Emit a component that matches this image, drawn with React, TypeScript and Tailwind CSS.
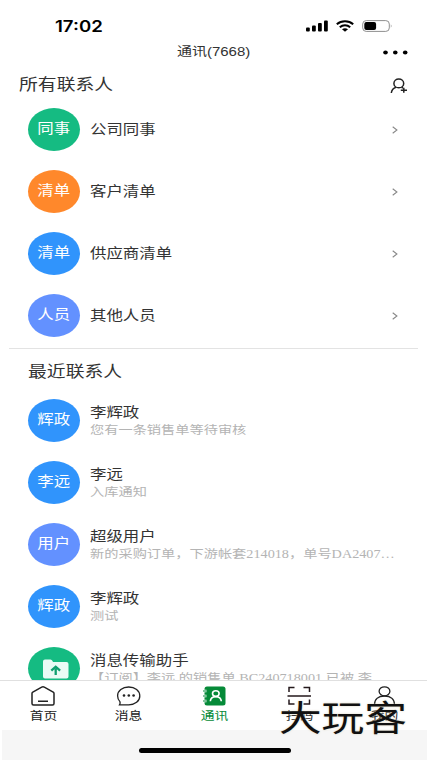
import type { ReactNode } from 'react'
import clsx from 'clsx'

const groups = [
  { badge: '同事', name: '公司同事', color: 'bg-[#15bb82]' },
  { badge: '清单', name: '客户清单', color: 'bg-[#ff882b]' },
  { badge: '清单', name: '供应商清单', color: 'bg-[#3094fc]' },
  { badge: '人员', name: '其他人员', color: 'bg-[#6391ff]' },
]

const recents = [
  { badge: '辉政', name: '李辉政', note: '您有一条销售单等待审核', color: 'bg-[#3094fc]' },
  { badge: '李远', name: '李远', note: '入库通知', color: 'bg-[#3094fc]' },
  { badge: '用户', name: '超级用户', note: '新的采购订单，下游帐套214018，单号DA2407…', color: 'bg-[#6391ff]' },
  { badge: '辉政', name: '李辉政', note: '测试', color: 'bg-[#3094fc]' },
  { badge: '', name: '消息传输助手', note: '【订阅】李远 的销售单 BC240718001 已被 李', color: 'bg-[#15bb82]' },
]

// The whole screen uses wide lettering, 1.2 times its natural width
const Wide = ({ children, className, center }: { children: ReactNode; className?: string; center?: boolean }) => (
  <span className={clsx('block w-max scale-x-120 whitespace-nowrap', center ? 'origin-center' : 'origin-left', className)}>
    {children}
  </span>
)

const FolderIcon = () => (
  <svg className="mt-[2px] ml-[3px]" width="28" height="22" viewBox="0 0 28 22">
    <path d="M1 3.500Q1 1.500 3 1.500H8.500Q9.800 1.500 10.500 3L11 4H24.500Q26.500 4 26.500 6V18.500Q26.500 20.500 24.500 20.500H3Q1 20.500 1 18.500Z" fill="#e9fbf5" />
    <path d="M13.700 17V10.500M9.300 12.700L13.700 8.700L18.100 12.700" fill="none" stroke="#0f9f70" strokeWidth="2.300" />
  </svg>
)

const Avatar = ({ badge, color }: { badge: string; color: string }) => (
  <div className={clsx('flex h-[43px] w-[52px] shrink-0 items-center justify-center rounded-[50%] text-white', color)}>
    {badge ? <Wide center className="text-[13.7px]">{badge}</Wide> : <FolderIcon />}
  </div>
)

const StatusBar = () => (
  <div className="flex h-[38px] items-start justify-between pt-[16px] pr-[34px] pl-[55px]">
    <Wide className="font-[Inter] text-[15.5px] leading-[21px] font-semibold text-black">17:02</Wide>
    <div className="flex h-[20px] items-center gap-[8px]">
      <svg width="22" height="12" viewBox="0 0 22 12">
        <rect x="0" y="7.500" width="3.800" height="4" rx="1" />
        <rect x="6" y="5.500" width="3.800" height="6" rx="1" />
        <rect x="12" y="3" width="3.800" height="8.500" rx="1" />
        <rect x="18" y="0.500" width="3.800" height="11" rx="1" />
      </svg>
      <svg width="18" height="12" viewBox="0 0 18 12" fill="none" stroke="black" strokeWidth="2">
        <path d="M0.800 4.200C5.300 0.200 12.700 0.200 17.200 4.200" />
        <path d="M3.800 7.200C6.800 4.500 11.200 4.500 14.200 7.200" />
        <path d="M6 9.200Q9 7.300 12 9.200L9 11.800Z" fill="black" stroke="none" />
      </svg>
      <svg width="31" height="12" viewBox="0 0 31 12">
        <rect x="0.700" y="0.600" width="26.600" height="10.800" rx="3.500" fill="none" stroke="#8f8f8f" />
        <rect x="2.300" y="2.100" width="11.800" height="7.800" rx="2" />
        <path d="M28.800 4.300Q30.600 6 28.800 7.700Z" fill="#999" />
      </svg>
    </div>
  </div>
)

const TitleBar = () => (
  <div className="grid h-[28px] grid-cols-[1fr_auto_1fr] items-center px-[19px]">
    <span />
    <Wide center className="font-['Liberation_Sans','Noto_Sans_CJK_SC',sans-serif] text-[12.5px]">通讯(7668)</Wide>
    <svg className="justify-self-end" width="25" height="5" viewBox="0 0 25 5" fill="black">
      <ellipse cx="2.500" cy="2.500" rx="2.300" ry="1.900" />
      <ellipse cx="12.300" cy="2.500" rx="2.300" ry="1.900" />
      <ellipse cx="22.200" cy="2.500" rx="2.300" ry="1.900" />
    </svg>
  </div>
)

const HomeIcon = () => (
  <svg width="24" height="20" viewBox="0 0 24 20" fill="none" stroke="#222" strokeWidth="1.500">
    <path d="M1 7.500Q1 6.700 1.800 6.200L10.700 1.200Q12 0.500 13.300 1.200L22.200 6.200Q23 6.700 23 7.500V17.500Q23 19 21.500 19H2.500Q1 19 1 17.500ZM7 15.300H17" />
  </svg>
)

const ChatIcon = () => (
  <svg width="25" height="20" viewBox="0 0 25 20" fill="none" stroke="#222" strokeWidth="1.300">
    <path d="M3.500 18.800Q4.600 16.900 3.900 15.600C2.300 14 1.600 12 1.600 9.800C1.600 4.700 6.400 1 12.700 1S23.800 4.800 23.800 9.900S19 18.800 12.700 18.800Z" />
    <g fill="#222" stroke="none">
      <circle cx="8" cy="9.500" r="1.300" />
      <circle cx="12.800" cy="9.500" r="1.300" />
      <circle cx="17.600" cy="9.500" r="1.300" />
    </g>
  </svg>
)

const BookIcon = () => (
  <svg width="24" height="20" viewBox="0 0 24 20">
    <rect x="2.500" y="0.500" width="21" height="19" rx="2.500" fill="#058a38" />
    <path d="M1 5H4.500M1 10H4.500M1 15H4.500" stroke="white" strokeWidth="2.500" />
    <path d="M1 5H4.500M1 10H4.500M1 15H4.500" stroke="#058a38" strokeWidth="1.200" />
    <g fill="none" stroke="white" strokeWidth="1.600">
      <ellipse cx="13.800" cy="7.600" rx="3.300" ry="2.800" />
      <path d="M8.300 15.300Q8.600 10.700 13.800 10.700T19.300 15.300" />
    </g>
  </svg>
)

const ScanIcon = () => (
  <svg width="24" height="20" viewBox="0 0 24 20" fill="none" stroke="#24191c" strokeWidth="1.500">
    <path d="M2 6V1.500H7.500M16.500 1.500H22.500V6M2 13.500V18H7.500M16.500 18H22.500V13.500M0.500 10H24" />
  </svg>
)

const MeIcon = () => (
  <svg width="24" height="20" viewBox="0 0 24 20" fill="none" stroke="#222" strokeWidth="1.300">
    <ellipse cx="12.500" cy="5.300" rx="5.400" ry="4.500" />
    <path d="M2.500 18.500C2.500 13 6.500 10 12.500 10S22.500 13 22.500 18.500Q12.500 20 2.500 18.500Z" />
  </svg>
)

const tabs = [
  { label: '首页', icon: <HomeIcon /> },
  { label: '消息', icon: <ChatIcon /> },
  { label: '通讯', icon: <BookIcon />, active: true },
  { label: '扫码', icon: <ScanIcon /> },
  { label: '我的', icon: <MeIcon /> },
]

export default function App() {
  return (
    <div className="relative flex h-[760px] w-[427px] flex-col overflow-hidden bg-white font-['Liberation_Serif','Noto_Sans_CJK_SC',sans-serif] text-[#333]">
      <StatusBar />
      <TitleBar />

      <div className="flex h-[32px] items-center justify-between pr-[19px] pl-[19px]">
        <Wide className="pt-[5px] text-[15.7px]">所有联系人</Wide>
        <svg className="mt-[8px]" width="18" height="16" viewBox="0 0 18 16" fill="none" stroke="#222" strokeWidth="1.500">
          <ellipse cx="8.800" cy="5.400" rx="4.900" ry="4.400" />
          <path d="M1.300 15Q2 10.500 6 9.300M11.500 9.300L13 10M13.800 9.800V14.800M10.800 12.300H17" />
        </svg>
      </div>

      <div className="shrink-0 border-b border-transparent">
        {groups.map((g) => (
          <div key={g.name} className="flex h-[62px] items-center pr-[29px] pl-[28px]">
            <Avatar badge={g.badge} color={g.color} />
            <Wide className="mt-[2px] ml-[10px] text-[13.7px]">{g.name}</Wide>
            <svg className="mt-[2px] ml-auto" width="6" height="8" viewBox="0 0 6 8" fill="none" stroke="#888" strokeWidth="1.100">
              <path d="M0.700 0.800L4.900 4L0.700 7.200" />
            </svg>
          </div>
        ))}
      </div>

      <div className="mx-[9px] mt-px h-px shrink-0 bg-[#e3e3e3]" />
      <div className="flex h-[40px] shrink-0 items-center pl-[28px]">
        <Wide className="mt-[5px] text-[15.7px]">最近联系人</Wide>
      </div>

      <div className="min-h-0 flex-1 overflow-hidden">
        {recents.map((r, i) => (
          <div key={i} className="flex h-[62px] items-center pl-[28px]">
            <Avatar badge={r.badge} color={r.color} />
            <div className="mt-[2px] ml-[10px]">
              <Wide className="text-[13.7px] leading-[17px]">{r.name}</Wide>
              <Wide className="text-[11.85px] leading-[18px] text-[#b4b4b4]">{r.note}</Wide>
            </div>
          </div>
        ))}
      </div>

      <div className="flex h-[50px] shrink-0 border-t border-[#e0e0e0] bg-white">
        {tabs.map((t) => (
          <div key={t.label} className={clsx('flex flex-1 flex-col items-center pt-[5px]', t.active ? 'text-[#058a38]' : 'text-[#222]')}>
            {t.icon}
            <Wide center className="ml-px text-[11.5px] leading-[20px]">{t.label}</Wide>
          </div>
        ))}
      </div>
      <div className="ml-[2px] flex h-[30px] shrink-0 items-end justify-center bg-[#f6f6f6] pb-[7px]">
        <div className="h-[5px] w-[152px] rounded-full bg-black" />
      </div>

      <div className="absolute top-[699px] left-[279px]">
        <Wide className="text-[35.5px] leading-[40px] font-normal text-[#111] [text-shadow:0_0_2px_#d8d0b8]">大玩客</Wide>
      </div>
    </div>
  )
}
